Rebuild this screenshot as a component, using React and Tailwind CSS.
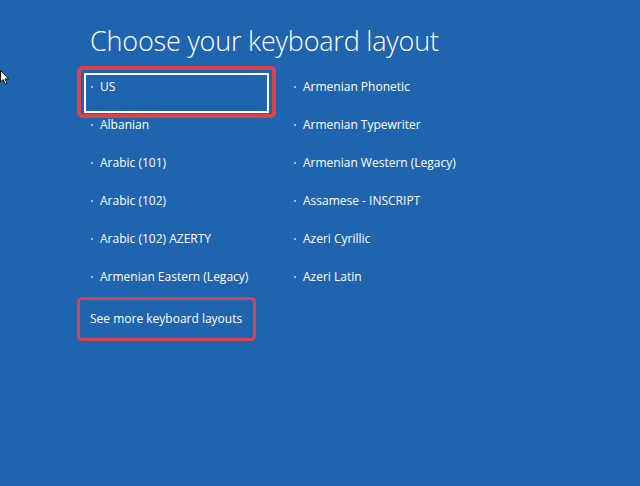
import React from "react";

const left = ["US", "Albanian", "Arabic (101)", "Arabic (102)", "Arabic (102) AZERTY", "Armenian Eastern (Legacy)"];
const right = ["Armenian Phonetic", "Armenian Typewriter", "Armenian Western (Legacy)", "Assamese - INSCRIPT", "Azeri Cyrillic", "Azeri Latin"];

function Item({ text, focused }) {
  return (
    <div className="relative h-[38px]">
      {focused && (
        <>
          <div className="absolute left-0 -top-[7px] w-[199px] h-[52px] border-4 border-[#d9434e] rounded-[5px]" />
          <div className="absolute left-[7px] top-0 w-[185px] h-[40px] border-2 border-white" />
        </>
      )}
      <div className="flex items-center pl-[14px] pt-[5px] h-[18px] box-content text-[12px] text-white whitespace-nowrap">
        <span className="w-[2px] h-[2px] rounded-full bg-[#cfe0f3] mr-[7px]" />
        <span>{text}</span>
      </div>
    </div>
  );
}

export default function App() {
  return (
    <div
      className="relative w-[640px] h-[486px] bg-[#1f64ae] overflow-hidden"
      style={{ fontFamily: '"Open Sans", "Noto Sans", sans-serif' }}
    >
      {/* mouse pointer */}
      <svg className="absolute left-0 top-[70px]" width="10" height="16" viewBox="0 0 10 16">
        <path d="M0.5 0.5 L0.5 12 L3.2 9.6 L5.2 14.2 L7 13.4 L5 8.9 L8.6 8.9 Z" fill="#fff" stroke="#111" strokeWidth="1" />
      </svg>

      <div className="pl-[77px] pt-[24px]">
        <h1 className="pl-[13px] text-[27px] leading-[34px] font-light text-white tracking-[-0.2px] whitespace-nowrap">
          Choose your keyboard layout
        </h1>

        <div className="grid grid-cols-[203px_203px] mt-[15px]">
          <div>
            {left.map((t, i) => (
              <Item key={t} text={t} focused={i === 0} />
            ))}
          </div>
          <div>
            {right.map((t) => (
              <Item key={t} text={t} />
            ))}
          </div>
        </div>

        <div className="mt-[-4px] w-[179px] h-[44px] border-[3px] border-[#d9434e] rounded-[5px] flex items-center pl-[10px] text-[12px] text-white whitespace-nowrap">
          See more keyboard layouts
        </div>
      </div>
    </div>
  );
}
